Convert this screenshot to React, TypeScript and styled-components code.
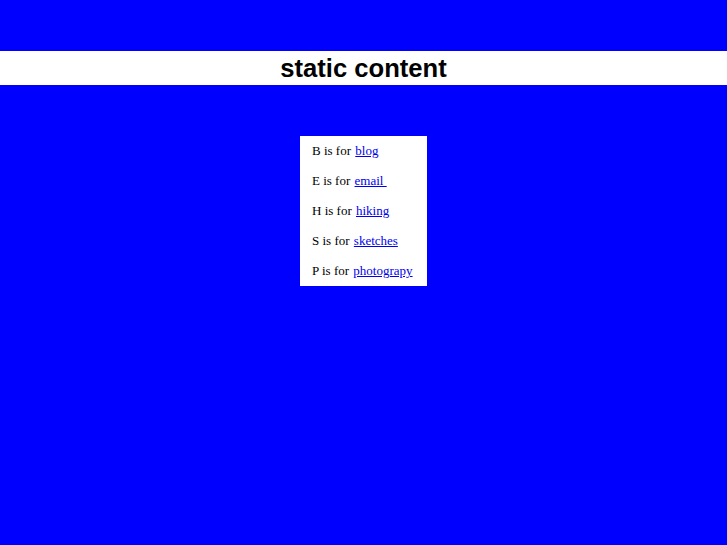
import React from "react";
import styled, { createGlobalStyle } from "styled-components";

const Global = createGlobalStyle`
  html, body {
    margin: 0;
    padding: 0;
    background: #0000ff;
  }
`;

const Page = styled.div`
  box-sizing: border-box;
  min-height: 100vh;
  padding-top: 51px;
  display: flex;
  flex-direction: column;
  align-items: center;
`;

const Banner = styled.header`
  align-self: stretch;
  height: 34px;
  background: #ffffff;
  display: flex;
  align-items: center;
  justify-content: center;
`;

const Title = styled.h1`
  margin: 0;
  font-family: "Liberation Sans", Arial, sans-serif;
  font-weight: bold;
  font-size: 25.6px;
  color: #000;
`;

const Menu = styled.ul`
  list-style: none;
  margin: 51px 0 0 0;
  padding: 0 14px 0 12px;
  width: 127px;
  box-sizing: border-box;
  background: #ffffff;
`;

const Item = styled.li`
  height: 30px;
  display: flex;
  align-items: center;
  font-family: "Liberation Serif", "Times New Roman", serif;
  font-size: 13px;
  color: #000;
  white-space: pre;
`;

const Link = styled.a`
  color: #0000ee;
  text-decoration: underline;
  margin-left: 1px;
`;

const entries: [string, string][] = [
  ["B", "blog"],
  ["E", "email "],
  ["H", "hiking"],
  ["S", "sketches"],
  ["P", "photograpy"],
];

export default function App() {
  return (
    <>
      <Global />
      <Page>
        <Banner>
          <Title>static content</Title>
        </Banner>
        <Menu>
          {entries.map(([letter, label]) => (
            <Item key={letter}>
              {letter} is for <Link href="#">{label}</Link>
            </Item>
          ))}
        </Menu>
      </Page>
    </>
  );
}
